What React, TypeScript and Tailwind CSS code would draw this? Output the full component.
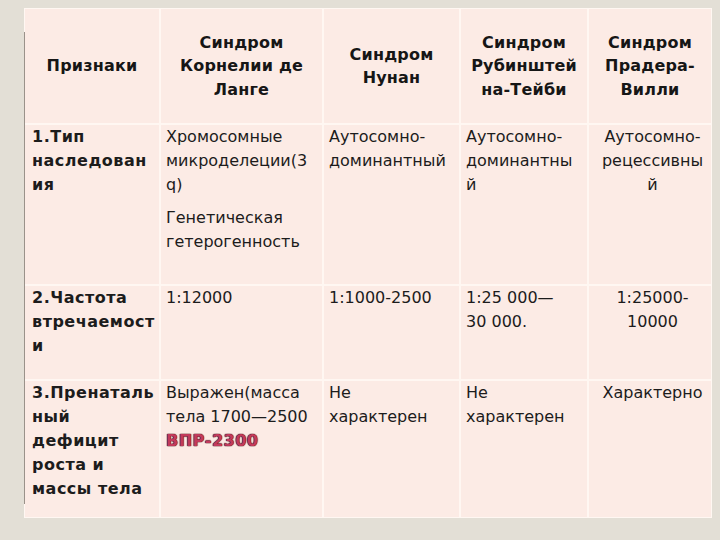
import React from "react";

const F = { fontFamily: '"DejaVu Sans", Verdana, sans-serif' };

function H({ lines }: { lines: string[] }) {
  return (
    <div className="bg-[#fcebe5] flex items-center justify-center text-center font-bold text-[16px] leading-[23.5px] text-[#161616] tracking-[0.2px]">
      <div>
        {lines.map((l, i) => (
          <div key={i}>{l}</div>
        ))}
      </div>
    </div>
  );
}

function L({ lines, bold, center }: { lines: string[]; bold?: boolean; center?: boolean }) {
  return (
    <div
      className={
        "bg-[#fcebe5] text-[16px] leading-[24px] text-[#1c1c1c] " +
        (bold ? "font-bold pl-[7px] tracking-[0.5px] " : "pl-[5px] ") +
        (center ? "text-center pl-0" : "")
      }
    >
      {lines.map((l, i) => (
        <div key={i}>{l}</div>
      ))}
    </div>
  );
}

export default function App() {
  return (
    <div className="w-[720px] h-[540px] bg-[#e3dfd6] relative overflow-hidden" style={F}>
      <div className="absolute left-[24px] top-[32px] w-[1px] h-[472px] bg-[#9a928a]" />
      <div className="pt-[8px] pl-[24px]">
        <div className="grid grid-cols-[134px_161px_135px_126px_122px] grid-rows-[114px_159px_93px_136px] gap-[2px] bg-[#fff7f2] w-[688px] border border-[#fff7f2]">
          <H lines={["Признаки"]} />
          <H lines={["Синдром", "Корнелии де", "Ланге"]} />
          <H lines={["Синдром", "Нунан"]} />
          <H lines={["Синдром", "Рубинштей", "на-Тейби"]} />
          <H lines={["Синдром", "Прадера-", "Вилли"]} />

          <L bold lines={["1.Тип", "наследован", "ия"]} />
          <div className="bg-[#fcebe5] pl-[5px] text-[16px] leading-[24px] text-[#1c1c1c]">
            <div>Хромосомные</div>
            <div>микроделеции(3</div>
            <div>q)</div>
            <div className="mt-[9px]">Генетическая</div>
            <div>гетерогенность</div>
          </div>
          <L lines={["Аутосомно-", "доминантный"]} />
          <L lines={["Аутосомно-", "доминантны", "й"]} />
          <L center lines={["Аутосомно-", "рецессивны", "й"]} />

          <L bold lines={["2.Частота", "втречаемост", "и"]} />
          <L lines={["1:12000"]} />
          <L lines={["1:1000-2500"]} />
          <L lines={["1:25 000—", "30 000."]} />
          <L center lines={["1:25000-", "10000"]} />

          <L bold lines={["3.Пренаталь", "ный", "дефицит", "роста и", "массы тела"]} />
          <div className="bg-[#fcebe5] pl-[5px] text-[16px] leading-[24px] text-[#1c1c1c]">
            <div>Выражен(масса</div>
            <div>тела 1700—2500</div>
            <div
              className="font-bold text-[#c23a5c] tracking-[0.5px]"
              style={{ textShadow: "0 0 1px #4a0c1a, 0 0 1px #4a0c1a, 0 0 1px #4a0c1a" }}
            >
              ВПР-2300
            </div>
          </div>
          <L lines={["Не", "характерен"]} />
          <L lines={["Не", "характерен"]} />
          <L center lines={["Характерно"]} />
        </div>
      </div>
    </div>
  );
}
